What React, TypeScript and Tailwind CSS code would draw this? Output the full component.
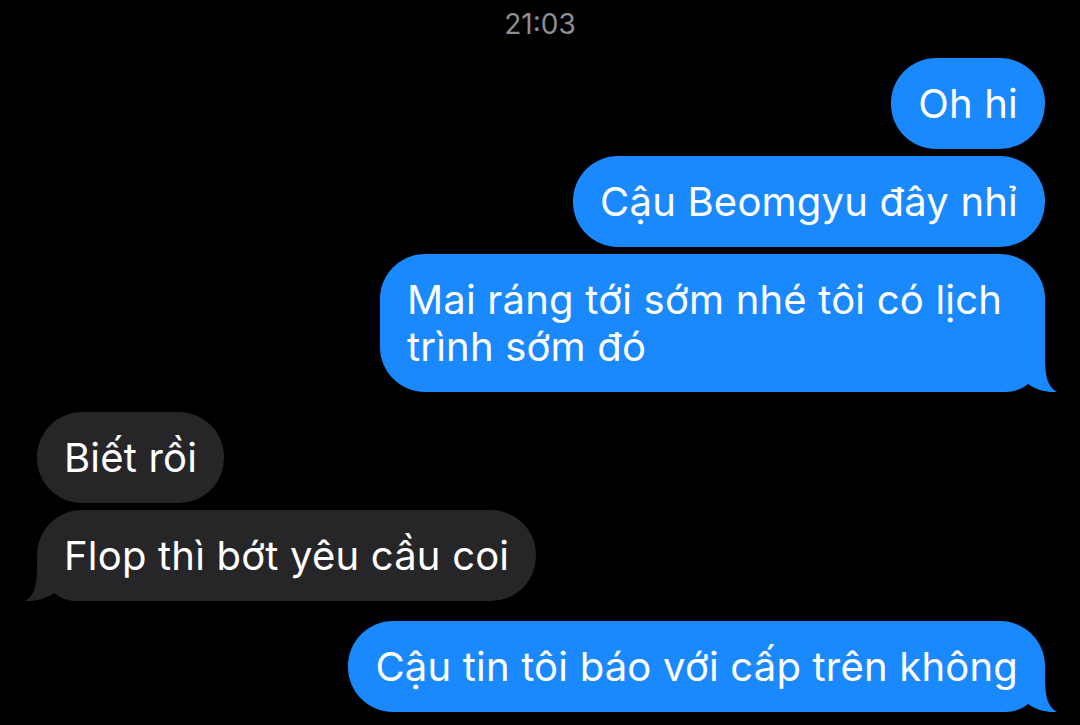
import React from "react";

const BLUE = "#1a89fe";

function Tail({ side, color }: { side: "left" | "right"; color: string }) {
  return (
    <svg
      width="57"
      height="45"
      viewBox="0 0 57 45"
      className={
        side === "right"
          ? "absolute bottom-0 right-[-12px]"
          : "absolute bottom-0 left-[-12px] -scale-x-100"
      }
    >
      <path
        d="M0 0 L45 0 L45 12 C45 30 48 40 57 45 C49 45.5 38 44 28 37 C22 42 14 45 5 45 L0 45 Z"
        fill={color}
      />
    </svg>
  );
}

function Bubble({
  side,
  tail,
  extra,
  children,
}: {
  side: "left" | "right";
  tail?: boolean;
  extra?: string;
  children: React.ReactNode;
}) {
  const color = side === "right" ? BLUE : "#262628";
  return (
    <div className={side === "right" ? "flex justify-end" : "flex justify-start"}>
      <div
        className={
          "relative rounded-[45px] px-[27px] py-[22px] text-[40px] leading-[47px] text-white tracking-[0.2px] " +
          (side === "right" ? "bg-[#1a89fe]" : "bg-[#262628]") +
          (extra ? " " + extra : "")
        }
      >
        <span className="relative z-10">{children}</span>
        {tail ? <Tail side={side} color={color} /> : null}
      </div>
    </div>
  );
}

export default function App() {
  return (
    <div
      className="w-[1080px] h-[725px] bg-black overflow-hidden"
      style={{ fontFamily: "Inter, 'Noto Sans', sans-serif" }}
    >
      <div className="pt-[8px] text-center text-[28px] leading-[32px] text-[#8e8e93]">21:03</div>
      <div className="flex flex-col pl-[37px] pr-[35px] pt-[18px]">
        <div className="flex flex-col gap-[7px]">
          <Bubble side="right">Oh hi</Bubble>
          <Bubble side="right">Cậu Beomgyu đây nhỉ</Bubble>
          <Bubble side="right" tail extra="w-[665px]">
            Mai ráng tới sớm nhé tôi có lịch
            <br />
            trình sớm đó
          </Bubble>
        </div>
        <div className="flex flex-col gap-[7px] mt-[20px]">
          <Bubble side="left">Biết rồi</Bubble>
          <Bubble side="left" tail>
            Flop thì bớt yêu cầu coi
          </Bubble>
        </div>
        <div className="flex flex-col gap-[7px] mt-[20px]">
          <Bubble side="right" tail>
            Cậu tin tôi báo với cấp trên không
          </Bubble>
        </div>
      </div>
    </div>
  );
}
